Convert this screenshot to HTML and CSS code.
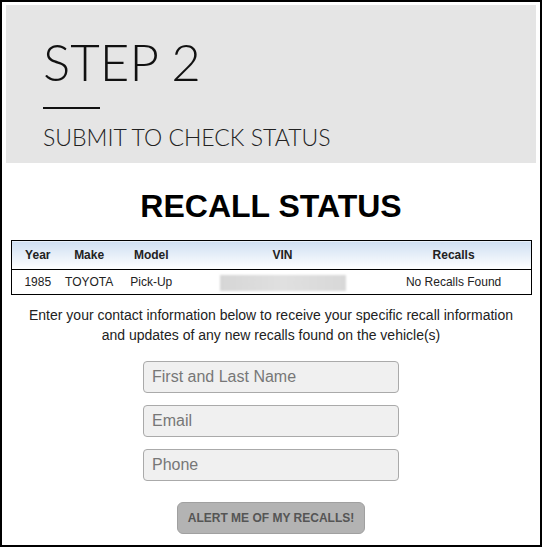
FILE: index.html
```html
<!DOCTYPE html>
<html lang="en">

<head>
    <meta charset="UTF-8">
    <meta name="viewport" content="width=device-width, initial-scale=1.0">
    <title>Recall Status</title>
    <link rel="stylesheet" href="styles.css">
</head>

<body>
    <div class="frame">
        <div class="step-header">
            <div class="step-title">STEP 2</div>
            <div class="step-rule"></div>
            <div class="step-sub">SUBMIT TO CHECK STATUS</div>
        </div>

        <div class="content">
            <h1 class="status-title">RECALL STATUS</h1>

            <table class="recalls">
                <colgroup>
                    <col class="c-year">
                    <col class="c-make">
                    <col class="c-model">
                    <col class="c-vin">
                    <col class="c-recalls">
                </colgroup>
                <thead>
                    <tr>
                        <th>Year</th>
                        <th>Make</th>
                        <th>Model</th>
                        <th>VIN</th>
                        <th>Recalls</th>
                    </tr>
                </thead>
                <tbody>
                    <tr>
                        <td>1985</td>
                        <td>TOYOTA</td>
                        <td>Pick-Up</td>
                        <td><span class="vin-blur"></span></td>
                        <td>No Recalls Found</td>
                    </tr>
                </tbody>
            </table>

            <p class="intro">Enter your contact information below to receive your specific recall information<br>and updates of any new recalls found on the vehicle(s)</p>

            <form class="contact" onsubmit="return false">
                <input type="text" class="field" placeholder="First and Last Name">
                <input type="email" class="field" placeholder="Email">
                <input type="tel" class="field" placeholder="Phone">
                <button type="submit" class="alert-btn">ALERT ME OF MY RECALLS!</button>
            </form>
        </div>
    </div>
</body>

</html>
```

FILE: styles.css
```css
body {
    margin: 0;
    padding: 0;
    font-family: "Liberation Sans", Arial, sans-serif;
    color: #222;
}

.frame {
    width: 542px;
    height: 547px;
    box-sizing: border-box;
    border: 2px solid #000;
    padding: 3px 4px 0 4px;
    background-color: #fff;
    overflow: hidden;
}

.step-header {
    height: 158px;
    background-color: #e5e5e5;
    padding: 27px 0 0 37px;
    box-sizing: border-box;
}

.step-title {
    font-family: Lato, "Open Sans", sans-serif;
    font-weight: 300;
    font-size: 51px;
    line-height: 60px;
    color: #111;
}

.step-rule {
    width: 57px;
    height: 2px;
    background-color: #111;
    margin: 15px 0 0 0;
}

.step-sub {
    font-family: Lato, "Open Sans", sans-serif;
    font-weight: 300;
    font-size: 23px;
    line-height: 28px;
    color: #222;
    margin-top: 14px;
}

.content {
    display: flex;
    flex-direction: column;
    align-items: center;
}

.status-title {
    margin: 25px 0 16px 0;
    font-size: 32px;
    line-height: 36px;
    font-weight: bold;
    color: #000;
}

.recalls {
    width: 521px;
    border-collapse: collapse;
    border: 1px solid #000;
    table-layout: fixed;
    font-size: 12px;
}

.c-year { width: 53px; }
.c-make { width: 50px; }
.c-model { width: 74px; }
.c-vin { width: 188px; }
.c-recalls { width: 154px; }

.recalls th {
    height: 28px;
    padding: 0;
    font-weight: bold;
    text-align: center;
    background: linear-gradient(to bottom, #cfdff2, #ffffff);
    border-bottom: 1px solid #000;
}

.recalls td {
    height: 24px;
    padding: 0;
    text-align: center;
    color: #222;
}

.vin-blur {
    display: inline-block;
    width: 126px;
    height: 16px;
    margin-top: 2px;
    vertical-align: middle;
    background: linear-gradient(to right, #d6d6d6, #e0e0e0 50%, #d8d8d8);
    filter: blur(1px);
}

.intro {
    margin: 10px 0 0 0;
    font-size: 14px;
    line-height: 20px;
    text-align: center;
    color: #222;
}

.contact {
    display: flex;
    flex-direction: column;
    align-items: center;
    margin-top: 16px;
}

.field {
    width: 256px;
    height: 32px;
    box-sizing: border-box;
    margin: 0 0 12px 0;
    padding: 0 8px;
    border: 1px solid #aaa;
    border-radius: 4px;
    background-color: #f0f0f0;
    font-family: "Liberation Sans", Arial, sans-serif;
    font-size: 16px;
    color: #555;
}

.field::placeholder {
    color: #777;
}

.alert-btn {
    width: 188px;
    height: 32px;
    margin-top: 9px;
    border: 1px solid #a0a0a0;
    border-radius: 6px;
    background-color: #b3b3b3;
    font-family: "Liberation Sans", Arial, sans-serif;
    font-weight: bold;
    font-size: 12px;
    color: #555;
}
```
